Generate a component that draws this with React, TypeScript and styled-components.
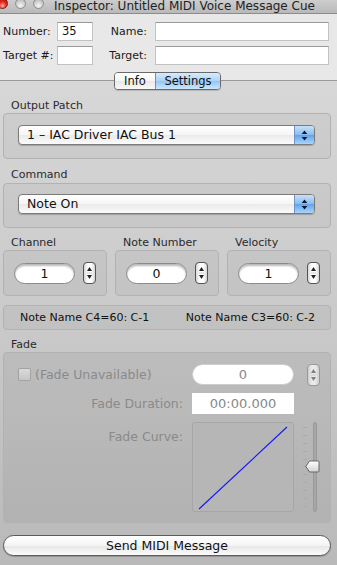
import React from "react";
import styled, { createGlobalStyle, css } from "styled-components";

const Global = createGlobalStyle`
  html, body { margin: 0; padding: 0; background: #c0c0c0; }
  body { font-family: "DejaVu Sans", "Liberation Sans", sans-serif; }
  * { box-sizing: border-box; }
`;

const FONT = `"DejaVu Sans", "Liberation Sans", sans-serif`;

const Window = styled.div`
  width: 337px;
  height: 565px;
  overflow: hidden;
  display: flex;
  flex-direction: column;
  font-family: ${FONT};
  color: #1a1a1a;
  background: linear-gradient(to bottom, #dcdcdc 0px, #d6d6d6 100px, #cbcbcb 300px, #b9b9b9 565px);
`;

const TitleBar = styled.div`
  height: 14px;
  flex: none;
  display: flex;
  align-items: flex-start;
  background: linear-gradient(to bottom, #cdcdcd, #b9b9b9);
  border-bottom: 1px solid #8c8c8c;
`;

const Lights = styled.div`
  display: flex;
  gap: 7px;
  margin-left: -3px;
  margin-top: -2px;
`;

const Light = styled.span<{ $red?: boolean }>`
  width: 11px;
  height: 11px;
  border-radius: 50%;
  ${(p) =>
    p.$red
      ? css`
          background: radial-gradient(circle at 50% 75%, #ffb3a6 0%, #ea2c20 45%, #a80f07 100%);
          border: 1px solid #7a1b14;
        `
      : css`
          background: radial-gradient(circle at 50% 75%, #f6f6f6 0%, #d2d2d2 50%, #a9a9a9 100%);
          border: 1px solid #8e8e8e;
        `}
`;

const Title = styled.div`
  margin-left: 10px;
  font-size: 12px;
  line-height: 13px;
  color: #222;
  white-space: nowrap;
`;

const Header = styled.div`
  flex: none;
  background: #e8e8e8;
  padding: 8px 0 7px 3px;
  display: grid;
  grid-template-columns: 47px 43px 54px 181px;
  grid-auto-rows: 19px;
  row-gap: 5px;
  align-items: center;
`;

const HLabel = styled.label`
  font-size: 11px;
  text-align: right;
  white-space: nowrap;
  color: #1a1a1a;
`;

const HField = styled.div<{ $w: number; $ml: number }>`
  width: ${(p) => p.$w}px;
  height: 19px;
  margin-left: ${(p) => p.$ml}px;
  background: #fff;
  border: 1px solid #c2c2c2;
  border-top-color: #9a9a9a;
  font-size: 11.5px;
  line-height: 17px;
  padding-left: 4px;
  color: #111;
`;

const TabStrip = styled.div`
  flex: none;
  height: 18px;
  display: flex;
  justify-content: center;
  background: linear-gradient(to bottom, #e8e8e8 0, #e8e8e8 8px, #9a9a9a 8px, #9a9a9a 9px, transparent 9px);
`;

const Tabs = styled.div`
  display: flex;
  height: 18px;
  margin-left: -2px;
  border: 1px solid #6a6a6a;
  border-radius: 4px;
  overflow: hidden;
  box-shadow: 0 1px 1px rgba(0, 0, 0, 0.15);
`;

const Tab = styled.div<{ $active?: boolean; $w: number }>`
  width: ${(p) => p.$w}px;
  font-size: 11.5px;
  line-height: 16px;
  text-align: center;
  color: #111;
  ${(p) =>
    p.$active
      ? css`
          background: linear-gradient(to bottom, #d7ebfc 0%, #abd3f7 50%, #91c6f5 51%, #cde8fd 100%);
        `
      : css`
          background: linear-gradient(to bottom, #ffffff 0%, #f5f5f5 50%, #e8e8e8 51%, #f8f8f8 100%);
          border-right: 1px solid #8a8a8a;
        `}
`;

const Content = styled.div`
  flex: 1;
  display: flex;
  flex-direction: column;
  padding: 9px 6px 0 3px;
`;

const SectionLabel = styled.div`
  font-size: 11px;
  line-height: 14px;
  height: 14px;
  padding-left: 8px;
  color: #2a2a2a;
  white-space: nowrap;
`;

const Group = styled.div<{ $h: number; $mb?: number; $mt?: number }>`
  height: ${(p) => p.$h}px;
  margin-top: ${(p) => p.$mt ?? 0}px;
  margin-bottom: ${(p) => p.$mb ?? 8}px;
  border: 1px solid #b2b2b2;
  border-radius: 4px;
  background: rgba(0, 0, 0, 0.035);
`;

const PopupGroup = styled(Group)<{ $pt: number }>`
  padding: ${(p) => p.$pt}px 15px 0 14px;
`;

const Popup = styled.div`
  height: 20px;
  display: flex;
  border: 1px solid #7a7a7a;
  border-radius: 4px;
  overflow: hidden;
  box-shadow: 0 1px 1px rgba(0, 0, 0, 0.2);
  background: linear-gradient(to bottom, #ffffff 0%, #f5f5f5 50%, #eaeaea 51%, #fbfbfb 100%);
`;

const PopupText = styled.div`
  flex: 1;
  font-size: 12.5px;
  line-height: 18px;
  padding-left: 8px;
  color: #111;
  white-space: nowrap;
`;

const PopupArrows = styled.div`
  width: 20px;
  flex: none;
  border-left: 1px solid #6d94c9;
  background: linear-gradient(to bottom, #c9e1f8 0%, #88bbef 50%, #62a2ea 51%, #a8d6fc 100%);
  display: flex;
  align-items: center;
  justify-content: center;
`;

const Row3 = styled.div`
  display: grid;
  grid-template-columns: 104px 104px 104px;
  column-gap: 8px;
`;

const SmallGroup = styled(Group)`
  display: flex;
  align-items: center;
  padding: 0 0 0 10px;
  gap: 8px;
`;

const Pill = styled.div<{ $w: number; $disabled?: boolean }>`
  width: ${(p) => p.$w}px;
  height: 21px;
  border-radius: 11px;
  background: #fff;
  border: 1px solid ${(p) => (p.$disabled ? "#cdcdcd" : "#8a8a8a")};
  box-shadow: ${(p) => (p.$disabled ? "none" : "inset 0 2px 2px rgba(0,0,0,0.28)")};
  text-align: center;
  font-size: ${(p) => (p.$disabled ? 13 : 12.5)}px;
  line-height: 19px;
  color: ${(p) => (p.$disabled ? "#8a8a8a" : "#111")};
`;

const Stepper = styled.div<{ $disabled?: boolean }>`
  width: 13px;
  height: 22px;
  border-radius: 4px;
  border: 1px solid ${(p) => (p.$disabled ? "#8c8c8c" : "#555")};
  background: linear-gradient(to right, #d6d6d6, #ffffff 35%, #ffffff 65%, #d6d6d6);
  display: flex;
  align-items: center;
  justify-content: center;
  opacity: ${(p) => (p.$disabled ? 0.7 : 1)};
`;

const NoteBox = styled(Group)`
  display: flex;
  align-items: center;
  justify-content: space-between;
  padding: 0 15px 0 16px;
  font-size: 11px;
  color: #111;
  white-space: nowrap;
`;

const FadeGroup = styled(Group)`
  display: grid;
  grid-template-columns: 179px 102px 26px;
  grid-template-rows: 21px 21px 90px;
  row-gap: 8px;
  column-gap: 9px;
  padding-top: 11px;
  background: rgba(0, 0, 0, 0.05);
`;

const CheckRow = styled.div`
  display: flex;
  align-items: center;
  gap: 4px;
  padding-left: 14px;
  font-size: 12.5px;
  color: #8a8a8a;
  white-space: nowrap;
`;

const CheckBox = styled.span`
  width: 13px;
  height: 13px;
  flex: none;
  border: 1px solid #a3a3a3;
  border-radius: 2px;
  background: linear-gradient(to bottom, #dadada, #c6c6c6);
`;

const FadeLabel = styled.div<{ $top?: boolean }>`
  font-size: 12.5px;
  color: #8a8a8a;
  text-align: right;
  white-space: nowrap;
  align-self: ${(p) => (p.$top ? "start" : "center")};
  margin-top: ${(p) => (p.$top ? "7px" : "0")};
`;

const Cell = styled.div<{ $ml?: number }>`
  margin-left: ${(p) => p.$ml ?? 0}px;
  display: flex;
  align-items: center;
`;

const DurationField = styled.div`
  width: 102px;
  height: 21px;
  background: #fff;
  font-size: 13px;
  line-height: 21px;
  text-align: center;
  color: #888;
`;

const CurveBox = styled.div`
  width: 102px;
  height: 90px;
  border: 1px solid #a6a6a6;
  border-radius: 3px;
  background: #b6b6b6;
  position: relative;
`;

const CurveSvg = styled.svg`
  position: absolute;
  left: 0;
  top: 0;
`;

const SliderCol = styled.div`
  position: relative;
  width: 26px;
  height: 90px;
`;

const Ticks = styled.div`
  position: absolute;
  left: 0;
  top: 5px;
  bottom: 5px;
  width: 4px;
  display: flex;
  flex-direction: column;
  justify-content: space-between;
`;

const Tick = styled.span`
  height: 1px;
  background: #a9a9a9;
`;

const Track = styled.div`
  position: absolute;
  left: 10px;
  top: 0;
  bottom: 0;
  width: 4px;
  border-radius: 2px;
  background: #a6a6a6;
  border: 1px solid #9a9a9a;
`;

const Thumb = styled.svg`
  position: absolute;
  left: 2px;
  top: 38px;
`;

const SendButton = styled.button`
  margin-top: 12px;
  width: 328px;
  height: 21px;
  border-radius: 11px;
  border: 1px solid #5a5a5a;
  background: linear-gradient(to bottom, #ffffff 0%, #f4f4f4 50%, #e6e6e6 51%, #fbfbfb 100%);
  box-shadow: 0 1px 1px rgba(0, 0, 0, 0.2);
  font-family: ${FONT};
  font-size: 12.5px;
  color: #111;
  padding: 0;
  line-height: 19px;
`;

const UpDown = ({ color = "#222" }: { color?: string }) => (
  <svg width="7" height="16" viewBox="0 0 7 16">
    <path d="M3.5 2 L6 6 L1 6 Z" fill={color} />
    <line x1="1" y1="8" x2="6" y2="8" stroke="#cfcfcf" strokeWidth="1" />
    <path d="M3.5 14 L6 10 L1 10 Z" fill={color} />
  </svg>
);

const PopupGlyph = () => (
  <svg width="7" height="13" viewBox="0 0 7 13">
    <path d="M3.5 1.5 L6.3 5 L0.7 5 Z" fill="#0b1830" />
    <path d="M3.5 11.5 L6.3 8 L0.7 8 Z" fill="#0b1830" />
  </svg>
);

const StepperFields: { label: string; value: string }[] = [
  { label: "Channel", value: "1" },
  { label: "Note Number", value: "0" },
  { label: "Velocity", value: "1" },
];

export default function App() {
  return (
    <>
      <Global />
      <Window>
        <TitleBar>
          <Lights>
            <Light $red />
            <Light />
            <Light />
          </Lights>
          <Title>Inspector: Untitled MIDI Voice Message Cue</Title>
        </TitleBar>

        <Header>
          <HLabel>Number:</HLabel>
          <HField $w={36} $ml={7}>35</HField>
          <HLabel>Name:</HLabel>
          <HField $w={174} $ml={8}></HField>
          <HLabel>Target #:</HLabel>
          <HField $w={36} $ml={7}></HField>
          <HLabel>Target:</HLabel>
          <HField $w={174} $ml={8}></HField>
        </Header>

        <TabStrip>
          <Tabs>
            <Tab $w={41}>Info</Tab>
            <Tab $w={64} $active>
              Settings
            </Tab>
          </Tabs>
        </TabStrip>

        <Content>
          <SectionLabel>Output Patch</SectionLabel>
          <PopupGroup $h={46} $pt={11} $mb={9}>
            <Popup>
              <PopupText>1 – IAC Driver IAC Bus 1</PopupText>
              <PopupArrows>
                <PopupGlyph />
              </PopupArrows>
            </Popup>
          </PopupGroup>

          <SectionLabel>Command</SectionLabel>
          <PopupGroup $h={45} $pt={10} $mt={1} $mb={8}>
            <Popup>
              <PopupText>Note On</PopupText>
              <PopupArrows>
                <PopupGlyph />
              </PopupArrows>
            </Popup>
          </PopupGroup>

          <Row3>
            {StepperFields.map((f) => (
              <div key={f.label}>
                <SectionLabel>{f.label}</SectionLabel>
                <SmallGroup $h={46} $mb={9}>
                  <Pill $w={61}>{f.value}</Pill>
                  <Stepper>
                    <UpDown />
                  </Stepper>
                </SmallGroup>
              </div>
            ))}
          </Row3>

          <NoteBox $h={25} $mb={8}>
            <span>Note Name C4=60: C-1</span>
            <span>Note Name C3=60: C-2</span>
          </NoteBox>

          <SectionLabel>Fade</SectionLabel>
          <FadeGroup $h={171} $mb={0}>
            <CheckRow>
              <CheckBox />
              (Fade Unavailable)
            </CheckRow>
            <Cell>
              <Pill $w={102} $disabled>
                0
              </Pill>
            </Cell>
            <Cell $ml={4}>
              <Stepper $disabled>
                <UpDown color="#666" />
              </Stepper>
            </Cell>

            <FadeLabel>Fade Duration:</FadeLabel>
            <Cell>
              <DurationField>00:00.000</DurationField>
            </Cell>
            <div />

            <FadeLabel $top>Fade Curve:</FadeLabel>
            <Cell>
              <CurveBox>
                <CurveSvg width="100" height="88" viewBox="0 0 100 88">
                  <line x1="6" y1="86" x2="94" y2="4" stroke="#1414ff" strokeWidth="1.1" />
                </CurveSvg>
              </CurveBox>
            </Cell>
            <Cell>
              <SliderCol>
                <Ticks>
                  {Array.from({ length: 11 }).map((_, i) => (
                    <Tick key={i} />
                  ))}
                </Ticks>
                <Track />
                <Thumb width="15" height="13" viewBox="0 0 15 13">
                  <defs>
                    <linearGradient id="tg" x1="0" y1="0" x2="0" y2="1">
                      <stop offset="0" stopColor="#ffffff" />
                      <stop offset="1" stopColor="#d2d2d2" />
                    </linearGradient>
                  </defs>
                  <path
                    d="M0.8 6.5 L4.5 1 L13 1 Q14 1 14 2 L14 11 Q14 12 13 12 L4.5 12 Z"
                    fill="url(#tg)"
                    stroke="#666"
                    strokeWidth="1"
                  />
                </Thumb>
              </SliderCol>
            </Cell>
          </FadeGroup>

          <SendButton>Send MIDI Message</SendButton>
        </Content>
      </Window>
    </>
  );
}
